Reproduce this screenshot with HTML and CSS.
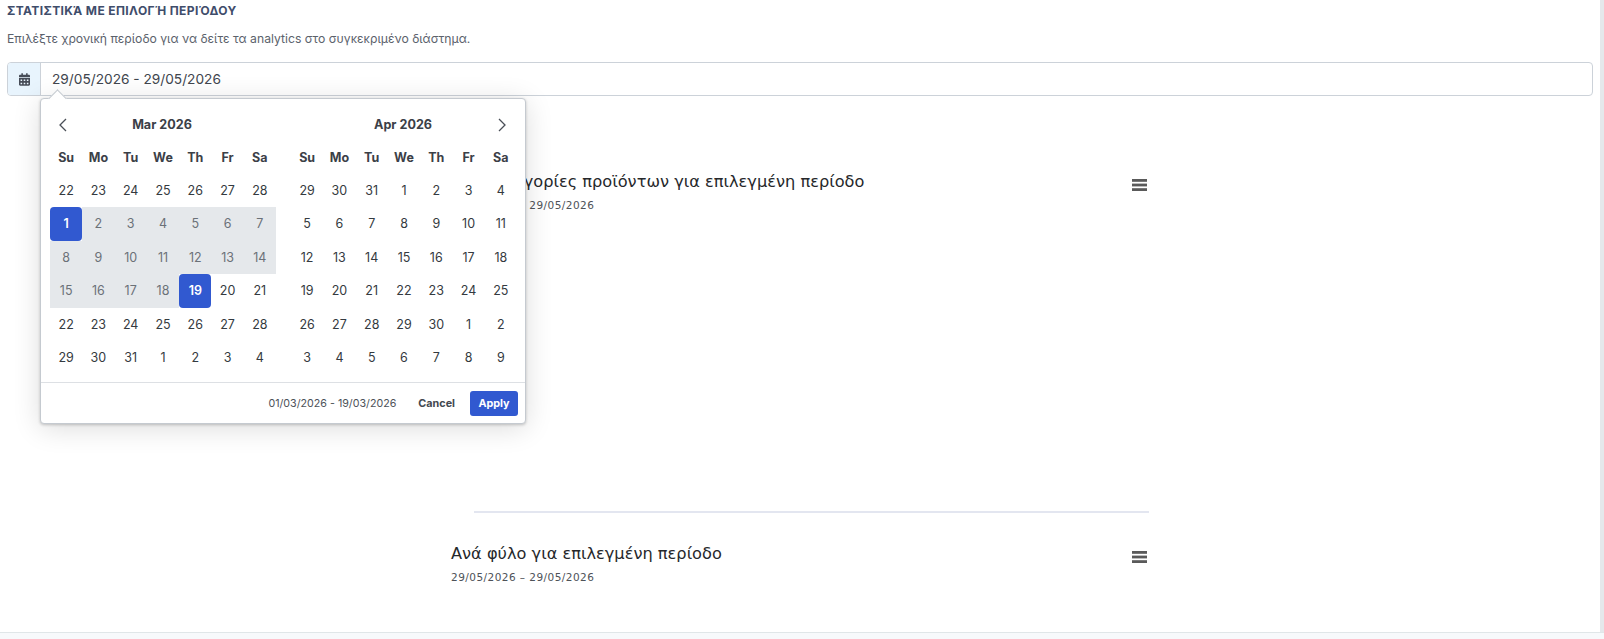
FILE: index.html
```html
<!DOCTYPE html>
<html lang="el">
<head>
  <meta charset="UTF-8">
  <title>Στατιστικά</title>
  <link rel="stylesheet" href="styles.css">
</head>
<body>
  <main class="content">
    <h6 class="section-title">ΣΤΑΤΙΣΤΙΚΆ ΜΕ ΕΠΙΛΟΓΉ ΠΕΡΙΌΔΟΥ</h6>
    <p class="section-desc">Επιλέξτε χρονική περίοδο για να δείτε τα analytics στο συγκεκριμένο διάστημα.</p>

    <div class="range-field">
      <span class="range-addon">
        <svg class="icon-calendar" viewBox="0 0 448 512"><path d="M0 464c0 26.5 21.5 48 48 48h352c26.5 0 48-21.5 48-48V192H0v272zm320-196c0-6.6 5.4-12 12-12h40c6.6 0 12 5.4 12 12v40c0 6.6-5.4 12-12 12h-40c-6.6 0-12-5.4-12-12v-40zm0 128c0-6.6 5.4-12 12-12h40c6.6 0 12 5.4 12 12v40c0 6.6-5.4 12-12 12h-40c-6.6 0-12-5.4-12-12v-40zM192 268c0-6.6 5.4-12 12-12h40c6.6 0 12 5.4 12 12v40c0 6.6-5.4 12-12 12h-40c-6.6 0-12-5.4-12-12v-40zm0 128c0-6.6 5.4-12 12-12h40c6.6 0 12 5.4 12 12v40c0 6.6-5.4 12-12 12h-40c-6.6 0-12-5.4-12-12v-40zM64 268c0-6.6 5.4-12 12-12h40c6.6 0 12 5.4 12 12v40c0 6.6-5.4 12-12 12H76c-6.6 0-12-5.4-12-12v-40zm0 128c0-6.6 5.4-12 12-12h40c6.6 0 12 5.4 12 12v40c0 6.6-5.4 12-12 12H76c-6.6 0-12-5.4-12-12v-40zM400 64h-48V16c0-8.8-7.2-16-16-16h-32c-8.8 0-16 7.2-16 16v48H160V16c0-8.8-7.2-16-16-16h-32c-8.8 0-16 7.2-16 16v48H48C21.5 64 0 85.5 0 112v48h448v-48c0-26.5-21.5-48-48-48z"/></svg>
      </span>
      <span class="range-input">29/05/2026 - 29/05/2026</span>
    </div>

    <section class="charts">
      <div class="chart-card chart-card-first">
        <div class="chart-head">
          <div>
            <h4 class="chart-title">Top κατηγορίες προϊόντων για επιλεγμένη περίοδο</h4>
            <div class="chart-date">29/05/2026 – 29/05/2026</div>
          </div>
          <svg class="icon-menu" viewBox="0 0 15 12"><rect width="15" height="2.8"/><rect y="4.6" width="15" height="2.8"/><rect y="9.2" width="15" height="2.8"/></svg>
        </div>
      </div>
      <hr class="chart-rule">
      <div class="chart-card">
        <div class="chart-head">
          <div>
            <h4 class="chart-title">Ανά φύλο για επιλεγμένη περίοδο</h4>
            <div class="chart-date">29/05/2026 – 29/05/2026</div>
          </div>
          <svg class="icon-menu" viewBox="0 0 15 12"><rect width="15" height="2.8"/><rect y="4.6" width="15" height="2.8"/><rect y="9.2" width="15" height="2.8"/></svg>
        </div>
      </div>
    </section>

    <!-- daterangepicker popup -->
    <div class="picker">
      <div class="picker-cals">
        <div class="cal">
          <div class="cal-head">
            <svg class="chev" viewBox="0 0 10 14"><path d="M8 1 2 7l6 6"/></svg>
            <span class="cal-month">Mar 2026</span>
            <span class="chev-space"></span>
          </div>
          <div class="cal-grid">
            <b>Su</b><b>Mo</b><b>Tu</b><b>We</b><b>Th</b><b>Fr</b><b>Sa</b>
            <span>22</span><span>23</span><span>24</span><span>25</span><span>26</span><span>27</span><span>28</span>
            <span class="start">1</span><span class="range">2</span><span class="range">3</span><span class="range">4</span><span class="range">5</span><span class="range">6</span><span class="range">7</span>
            <span class="range">8</span><span class="range">9</span><span class="range">10</span><span class="range">11</span><span class="range">12</span><span class="range">13</span><span class="range">14</span>
            <span class="range">15</span><span class="range">16</span><span class="range">17</span><span class="range">18</span><span class="end">19</span><span>20</span><span>21</span>
            <span>22</span><span>23</span><span>24</span><span>25</span><span>26</span><span>27</span><span>28</span>
            <span>29</span><span>30</span><span>31</span><span>1</span><span>2</span><span>3</span><span>4</span>
          </div>
        </div>
        <div class="cal">
          <div class="cal-head">
            <span class="chev-space"></span>
            <span class="cal-month">Apr 2026</span>
            <svg class="chev" viewBox="0 0 10 14"><path d="M2 1l6 6-6 6"/></svg>
          </div>
          <div class="cal-grid">
            <b>Su</b><b>Mo</b><b>Tu</b><b>We</b><b>Th</b><b>Fr</b><b>Sa</b>
            <span>29</span><span>30</span><span>31</span><span>1</span><span>2</span><span>3</span><span>4</span>
            <span>5</span><span>6</span><span>7</span><span>8</span><span>9</span><span>10</span><span>11</span>
            <span>12</span><span>13</span><span>14</span><span>15</span><span>16</span><span>17</span><span>18</span>
            <span>19</span><span>20</span><span>21</span><span>22</span><span>23</span><span>24</span><span>25</span>
            <span>26</span><span>27</span><span>28</span><span>29</span><span>30</span><span>1</span><span>2</span>
            <span>3</span><span>4</span><span>5</span><span>6</span><span>7</span><span>8</span><span>9</span>
          </div>
        </div>
      </div>
      <div class="picker-foot">
        <span class="picker-range">01/03/2026 - 19/03/2026</span>
        <button class="btn-cancel">Cancel</button>
        <button class="btn-apply">Apply</button>
      </div>
    </div>
  </main>
  <footer class="page-foot"></footer>
</body>
</html>
```

FILE: styles.css
```css
* {
  box-sizing: border-box;
}

html, body {
  margin: 0;
  height: 639px;
  overflow: hidden;
}

body {
  display: flex;
  flex-direction: column;
  background-color: #fff;
  font-family: Inter, "Noto Sans", sans-serif;
  color: #343a40;
}

.content {
  position: relative;
  flex: 1;
  min-height: 0;
  padding: 4px 7px 0;
  border-right: 4px solid #e5e8eb;
}

.page-foot {
  flex: none;
  height: 7px;
  background-color: #f7f9fb;
  border-top: 1px solid #e0e6e8;
}

.section-title {
  margin: 0;
  font-size: 12px;
  line-height: 14px;
  font-weight: 700;
  letter-spacing: 0.38px;
  color: #3f4d6b;
}

.section-desc {
  margin: 13px 0 0;
  font-size: 12.2px;
  line-height: 16px;
  color: #5b626c;
}

.range-field {
  display: flex;
  height: 34px;
  margin-top: 15px;
  border: 1px solid #ccd2d9;
  border-radius: 4px;
}

.range-addon {
  display: flex;
  align-items: center;
  justify-content: center;
  width: 33px;
  background-color: #e8f4fd;
  border-right: 1px solid #ccd2d9;
  border-radius: 3px 0 0 3px;
}

.icon-calendar {
  width: 11px;
  height: 13px;
  fill: #464c57;
}

.range-input {
  padding-left: 11px;
  font-size: 13.7px;
  line-height: 32px;
  color: #41464e;
}

.charts {
  margin: 0 444px 0 444px;
  padding-top: 75px;
}

.chart-head {
  display: flex;
  justify-content: space-between;
  padding-right: 2px;
}

.chart-card {
  height: 80px;
}

.chart-card-first {
  height: 340px;
}

.chart-title {
  margin: 0;
  font-family: "DejaVu Sans", sans-serif;
  font-size: 16.2px;
  line-height: 22px;
  font-weight: 400;
  color: #26282b;
}

.chart-date {
  margin-top: 5px;
  font-family: "DejaVu Sans", sans-serif;
  font-size: 10.5px;
  line-height: 14px;
  letter-spacing: 0.45px;
  color: #4e5258;
}

.icon-menu {
  width: 15px;
  height: 12px;
  margin-top: 8px;
  fill: #5a5a5a;
}

.chart-rule {
  margin: 0 0 30px 23px;
  border: 0;
  border-top: 2px solid #e3e6f0;
}

.picker {
  position: absolute;
  top: 98px;
  left: 40px;
  width: 486px;
  height: 326px;
  background-color: #fff;
  border: 1px solid #c5cad0;
  border-radius: 4px;
  box-shadow: 0 4px 28px rgba(0, 0, 0, 0.14), 0 1px 3px rgba(0, 0, 0, 0.2);
}

.picker::before {
  content: "";
  position: absolute;
  top: -7px;
  left: 10px;
  width: 12px;
  height: 12px;
  background-color: #fff;
  border-top: 1px solid #c5cad0;
  border-left: 1px solid #c5cad0;
  transform: rotate(45deg);
}

.picker-cals {
  display: flex;
  gap: 15px;
  padding: 9px 0 0 9px;
}

.cal {
  width: 226px;
}

.cal-head {
  display: flex;
  align-items: center;
  justify-content: space-between;
  height: 33px;
  padding: 0 10px 0 8px;
}

.chev {
  width: 10px;
  height: 14px;
  fill: none;
  stroke: #4a4f57;
  stroke-width: 1.3;
}

.chev-space {
  width: 10px;
}

.cal-month {
  font-size: 12.6px;
  font-weight: 700;
  color: #3b4047;
}

.cal-grid {
  display: grid;
  grid-template-columns: repeat(7, 1fr);
  grid-template-rows: 32.5px;
  grid-auto-rows: 33.5px;
  font-size: 12.5px;
  text-align: center;
}

.cal-grid b, .cal-grid span {
  display: flex;
  align-items: center;
  justify-content: center;
}

.cal-grid b {
  font-weight: 700;
  color: #3b4047;
}

.cal-grid .range {
  background-color: #e5e8eb;
  color: #6b7178;
}

.cal-grid .start, .cal-grid .end {
  background-color: #3159d0;
  color: #fff;
  font-weight: 600;
  border-radius: 4px;
}

.picker-foot {
  position: absolute;
  left: 0;
  right: 0;
  bottom: 0;
  display: flex;
  align-items: center;
  justify-content: flex-end;
  height: 41px;
  padding-right: 7px;
  border-top: 1px solid #dde0e4;
}

.picker-range {
  margin-right: 22px;
  font-size: 10.7px;
  color: #4d5259;
}

.btn-cancel, .btn-apply {
  height: 25px;
  padding: 0;
  border: 0;
  font-family: inherit;
  font-size: 10.8px;
  font-weight: 700;
  background: none;
  color: #43484f;
}

.btn-cancel {
  margin-right: 15px;
}

.btn-apply {
  width: 48px;
  background-color: #3159d0;
  color: #fff;
  border-radius: 3px;
}
```
